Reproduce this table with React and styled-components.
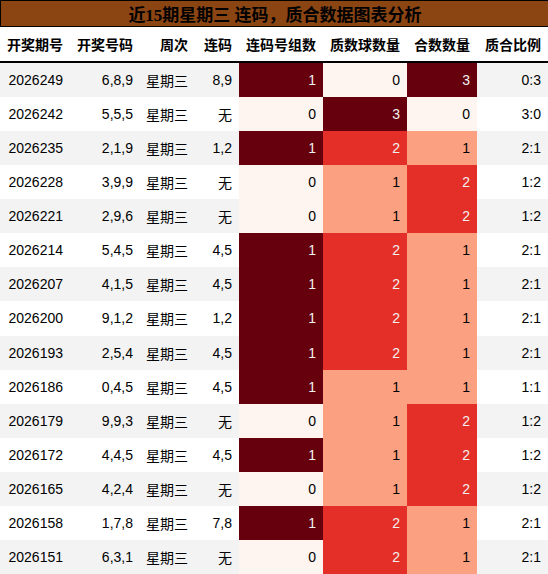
import React from "react";
import styled, { createGlobalStyle } from "styled-components";

const Global = createGlobalStyle`
  html, body { margin: 0; padding: 0; background: #ffffff; }
  body { font-family: "Liberation Sans", "Noto Sans CJK SC", sans-serif; }
`;

const Wrap = styled.div`
  width: 548px;
`;

const Title = styled.div`
  height: 25px;
  background: #8b4513;
  border: 1px solid #000;
  border-right: none;
  display: flex;
  align-items: center;
  justify-content: center;
  font-family: "Liberation Serif", "Noto Sans CJK SC", serif;
  font-weight: bold;
  font-size: 17px;
  color: #000;
  padding-left: 1px;
`;

const cols = "70px 70px 55px 44px 84px 84px 70px 71px";

const HeadRow = styled.div`
  display: grid;
  grid-template-columns: ${cols};
  height: 34px;
  background: #fff;
  border-bottom: 2px solid #000;
`;

const Th = styled.div`
  display: flex;
  align-items: center;
  justify-content: flex-end;
  padding-right: 7px;
  font-weight: bold;
  font-size: 14px;
  color: #000;
  white-space: nowrap;
`;

const Row = styled.div`
  display: grid;
  grid-template-columns: ${cols};
  height: 34.07px;
  background: ${(p) => (p.$odd ? "#f3f3f3" : "#ffffff")};
`;

const Td = styled.div`
  display: flex;
  align-items: center;
  justify-content: flex-end;
  padding-right: 7px;
  font-size: 14px;
  white-space: nowrap;
  color: ${(p) => p.$fg || "#000"};
  background: ${(p) => p.$bg || "transparent"};
`;

const headers = ["开奖期号", "开奖号码", "周次", "连码", "连码号组数", "质数球数量", "合数数量", "质合比例"];

const rows = [
  ["2026249", "6,8,9", "8,9", 1, 0, 3, "0:3"],
  ["2026242", "5,5,5", "无", 0, 3, 0, "3:0"],
  ["2026235", "2,1,9", "1,2", 1, 2, 1, "2:1"],
  ["2026228", "3,9,9", "无", 0, 1, 2, "1:2"],
  ["2026221", "2,9,6", "无", 0, 1, 2, "1:2"],
  ["2026214", "5,4,5", "4,5", 1, 2, 1, "2:1"],
  ["2026207", "4,1,5", "4,5", 1, 2, 1, "2:1"],
  ["2026200", "9,1,2", "1,2", 1, 2, 1, "2:1"],
  ["2026193", "2,5,4", "4,5", 1, 2, 1, "2:1"],
  ["2026186", "0,4,5", "4,5", 1, 1, 1, "1:1"],
  ["2026179", "9,9,3", "无", 0, 1, 2, "1:2"],
  ["2026172", "4,4,5", "4,5", 1, 1, 2, "1:2"],
  ["2026165", "4,2,4", "无", 0, 1, 2, "1:2"],
  ["2026158", "1,7,8", "7,8", 1, 2, 1, "2:1"],
  ["2026151", "6,3,1", "无", 0, 2, 1, "2:1"],
];

const scale3 = [
  { bg: "#fff5f0", fg: "#000" },
  { bg: "#fca082", fg: "#000" },
  { bg: "#e32f27", fg: "#f1f1f1" },
  { bg: "#67000d", fg: "#f1f1f1" },
];
const scale1 = [
  { bg: "#fff5f0", fg: "#000" },
  { bg: "#67000d", fg: "#f1f1f1" },
];

export default function App() {
  return (
    <Wrap>
      <Global />
      <Title>近15期星期三 连码，质合数据图表分析</Title>
      <HeadRow>
        {headers.map((h) => (
          <Th key={h}>{h}</Th>
        ))}
      </HeadRow>
      {rows.map((r, i) => {
        const a = scale1[r[3]];
        const b = scale3[r[4]];
        const c = scale3[r[5]];
        return (
          <Row key={r[0]} $odd={i % 2 === 0}>
            <Td>{r[0]}</Td>
            <Td>{r[1]}</Td>
            <Td>星期三</Td>
            <Td>{r[2]}</Td>
            <Td $bg={a.bg} $fg={a.fg}>{r[3]}</Td>
            <Td $bg={b.bg} $fg={b.fg}>{r[4]}</Td>
            <Td $bg={c.bg} $fg={c.fg}>{r[5]}</Td>
            <Td>{r[6]}</Td>
          </Row>
        );
      })}
    </Wrap>
  );
}
